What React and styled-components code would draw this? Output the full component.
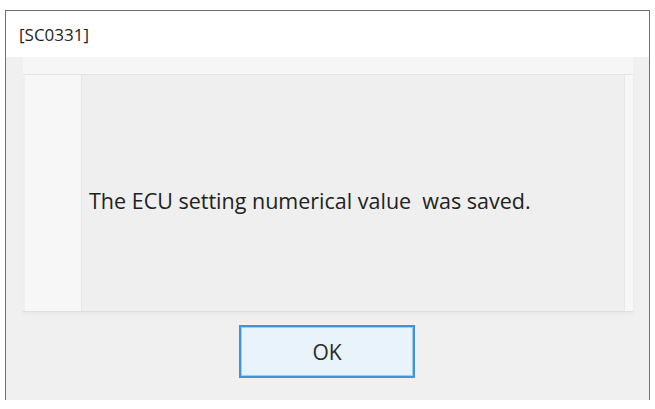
import React from 'react';
import styled, { createGlobalStyle } from 'styled-components';

const Global = createGlobalStyle`
  html, body {
    margin: 0;
    padding: 0;
    background: #ffffff;
  }
  body {
    font-family: "Open Sans", "Noto Sans", "Liberation Sans", sans-serif;
  }
`;

const Window = styled.div`
  margin: 10px 0 0 5px;
  width: 645px;
  height: 390px;
  box-sizing: border-box;
  border: 1px solid #6f6f6f;
  border-bottom: none;
  display: flex;
  flex-direction: column;
`;

const TitleBar = styled.div`
  height: 46px;
  flex: 0 0 auto;
  background: #ffffff;
  display: flex;
  align-items: center;
  padding-left: 13px;
  font-size: 17px;
  color: #1e1e1e;
`;

const Body = styled.div`
  flex: 1 1 auto;
  background: #f0f0f0;
  padding: 0 16px 0 17px;
  display: flex;
  flex-direction: column;
`;

const Panel = styled.div`
  height: 255px;
  display: flex;
  flex-direction: column;
`;

const HeaderStrip = styled.div`
  height: 17px;
  flex: 0 0 auto;
  background: #f6f6f6;
  border-bottom: 1px solid #e4e4e4;
`;

const Grid = styled.div`
  flex: 1 1 auto;
  display: grid;
  grid-template-columns: 57px 1fr 9px;
  padding-left: 2px;
  border-bottom: 1px solid #dedede;
  box-shadow: 0 2px 3px rgba(0, 0, 0, 0.04);
`;

const SideCell = styled.div`
  background: #f7f7f7;
  border-right: ${p => (p.$left ? '1px solid #e6e6e6' : 'none')};
  border-left: ${p => (p.$left ? 'none' : '1px solid #e8e8e8')};
`;

const MessageCell = styled.div`
  background: #efefef;
  display: flex;
  align-items: center;
  padding: 14px 0 0 7px;
  font-size: 21.5px;
  color: #222222;
  white-space: pre;
`;

const ButtonRow = styled.div`
  display: flex;
  justify-content: center;
  padding-top: 13px;
  padding-right: 2px;
`;

const Button = styled.button`
  width: 176px;
  height: 53px;
  box-sizing: border-box;
  border: 2px solid #3f94e0;
  box-shadow: inset 0 0 0 1px #9fcdf2;
  background: #e8f3fb;
  font-family: inherit;
  font-size: 21px;
  color: #2a2a2a;
  padding: 0;
`;

export default function App() {
  return (
    <>
      <Global />
      <Window>
        <TitleBar>[SC0331]</TitleBar>
        <Body>
          <Panel>
            <HeaderStrip />
            <Grid>
              <SideCell $left />
              <MessageCell>The ECU setting numerical value  was saved.</MessageCell>
              <SideCell />
            </Grid>
          </Panel>
          <ButtonRow>
            <Button>OK</Button>
          </ButtonRow>
        </Body>
      </Window>
    </>
  );
}
